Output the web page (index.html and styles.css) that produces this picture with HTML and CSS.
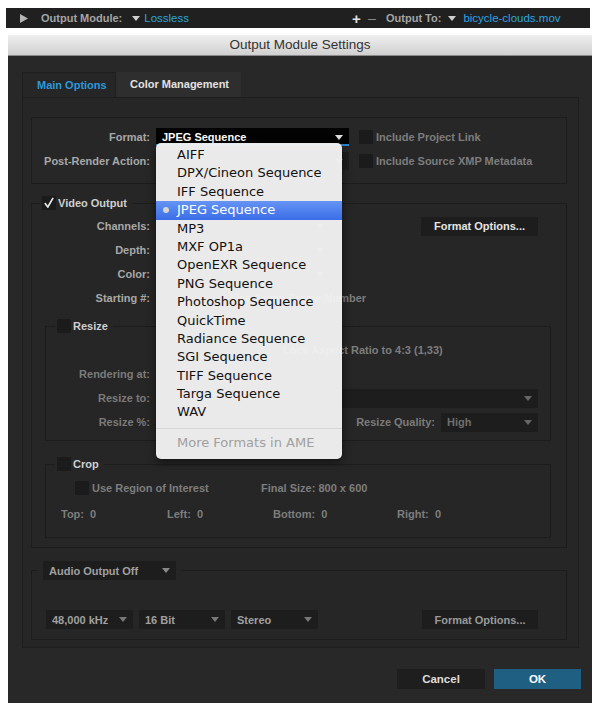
FILE: index.html
```html
<!DOCTYPE html>
<html>
<head>
<meta charset="utf-8">
<link rel="stylesheet" href="styles.css">
</head>
<body>
<div class="topbar">
  <div class="tb-left">
    <svg class="tri-right" viewBox="0 0 8 9"><polygon points="0,0 8,4.5 0,9" fill="#b5b5b5"/></svg>
    <span class="tb-label">Output Module:</span>
    <svg class="dd" viewBox="0 0 8 5"><polygon points="0,0 8,0 4,5" fill="#d0d0d0"/></svg>
    <span class="tb-link">Lossless</span>
  </div>
  <div class="tb-right">
    <span class="tb-plus">+</span><span class="tb-minus">–</span>
    <span class="tb-label">Output To:</span>
    <svg class="dd" viewBox="0 0 8 5"><polygon points="0,0 8,0 4,5" fill="#d0d0d0"/></svg>
    <span class="tb-link">bicycle-clouds.mov</span>
  </div>
</div>

<div class="dialog">
  <div class="titlebar">Output Module Settings</div>
  <div class="dbody">
    <div class="tabs">
      <div class="tab active">Main Options</div>
      <div class="tab other">Color Management</div>
    </div>
    <div class="panel">
      <div class="group">
        <div class="row">
          <div class="lbl w118">Format:</div>
          <div class="fmt-wrap">
            <div class="ddbox fmt"><span>JPEG Sequence</span><svg class="dd" viewBox="0 0 8 5"><polygon points="0,0 8,0 4,5" fill="#e0e0e0"/></svg></div>
            <div class="menu">
              <div class="mi">AIFF</div>
              <div class="mi">DPX/Cineon Sequence</div>
              <div class="mi">IFF Sequence</div>
              <div class="mi sel"><span class="bullet"></span>JPEG Sequence</div>
              <div class="mi">MP3</div>
              <div class="mi">MXF OP1a</div>
              <div class="mi">OpenEXR Sequence</div>
              <div class="mi">PNG Sequence</div>
              <div class="mi">Photoshop Sequence</div>
              <div class="mi">QuickTime</div>
              <div class="mi">Radiance Sequence</div>
              <div class="mi">SGI Sequence</div>
              <div class="mi">TIFF Sequence</div>
              <div class="mi">Targa Sequence</div>
              <div class="mi">WAV</div>
              <div class="msep"></div>
              <div class="mi more">More Formats in AME</div>
            </div>
          </div>
          <div class="cb ml10"></div><span class="dim ml3">Include Project Link</span>
        </div>
        <div class="row">
          <div class="lbl w118">Post-Render Action:</div>
          <div class="ddbox w193 end"><svg class="dd" viewBox="0 0 8 5"><polygon points="0,0 8,0 4,5" fill="#777"/></svg></div>
          <div class="cb ml10"></div><span class="dim ml3">Include Source XMP Metadata</span>
        </div>
      </div>

      <div class="fs video">
        <div class="legend lg-video">
          <div class="cb checked"><svg viewBox="0 0 14 14"><path d="M3.2 7.6 L5.8 11 L10.8 2.4" fill="none" stroke="#e8e8e8" stroke-width="1.7" stroke-linecap="round" stroke-linejoin="round"/></svg></div>
          <span class="legend-txt ml2">Video Output</span>
        </div>
        <div class="rows pt2">
          <div class="row">
            <div class="lbl w118">Channels:</div>
            <div class="ddbox w174 end"><svg class="dd" viewBox="0 0 8 5"><polygon points="0,0 8,0 4,5" fill="#777"/></svg></div>
            <div class="btn fo-top">Format Options...</div>
          </div>
          <div class="row">
            <div class="lbl w118">Depth:</div>
            <div class="ddbox w174 end"><svg class="dd" viewBox="0 0 8 5"><polygon points="0,0 8,0 4,5" fill="#777"/></svg></div>
          </div>
          <div class="row">
            <div class="lbl w118">Color:</div>
            <div class="ddbox w174 end"><svg class="dd" viewBox="0 0 8 5"><polygon points="0,0 8,0 4,5" fill="#777"/></svg></div>
          </div>
          <div class="row">
            <div class="lbl w118">Starting #:</div>
            <div class="inbox w52"></div>
            <div class="cb ml6"></div><span class="dim ml3">Use Comp Frame Number</span>
          </div>
        </div>

        <div class="fs sub resize">
          <div class="legend lg-sub">
            <div class="cb"></div>
            <span class="legend-txt ml2">Resize</span>
          </div>
          <div class="rows pt3 pb6">
            <div class="row">
              <div class="cb lock"></div><span class="dim ml3">Lock Aspect Ratio to 4:3 (1,33)</span>
            </div>
            <div class="row">
              <div class="lbl w104 dimlbl">Rendering at:</div>
            </div>
            <div class="row">
              <div class="lbl w104 dimlbl">Resize to:</div>
              <div class="ddbox w382 off end"><svg class="dd" viewBox="0 0 8 5"><polygon points="0,0 8,0 4,5" fill="#666"/></svg></div>
            </div>
            <div class="row">
              <div class="lbl w104 dimlbl">Resize %:</div>
              <div class="lbl dimlbl rq">Resize Quality:</div>
              <div class="ddbox w97 off"><span>High</span><svg class="dd" viewBox="0 0 8 5"><polygon points="0,0 8,0 4,5" fill="#666"/></svg></div>
            </div>
          </div>
        </div>

        <div class="fs sub crop">
          <div class="legend lg-sub">
            <div class="cb"></div>
            <span class="legend-txt ml2">Crop</span>
          </div>
          <div class="rows pt2 pb10">
            <div class="row h26">
              <div class="cell c1"><div class="cb"></div><span class="dim ml3">Use Region of Interest</span></div>
              <span class="dim">Final Size: 800 x 600</span>
            </div>
            <div class="row h26 pl15">
              <span class="dim cw106">Top:&nbsp; 0</span>
              <span class="dim cw106">Left:&nbsp; 0</span>
              <span class="dim cw124">Bottom:&nbsp; 0</span>
              <span class="dim">Right:&nbsp; 0</span>
            </div>
          </div>
        </div>
      </div>

      <div class="fs audio">
        <div class="legend lg-audio">
          <div class="ddbox w133 aud"><span>Audio Output Off</span><svg class="dd" viewBox="0 0 8 5"><polygon points="0,0 8,0 4,5" fill="#888"/></svg></div>
        </div>
        <div class="row audio-row">
          <div class="ddbox w87 aud"><span>48,000 kHz</span><svg class="dd" viewBox="0 0 8 5"><polygon points="0,0 8,0 4,5" fill="#777"/></svg></div>
          <div class="ddbox w86 aud ml6"><span>16 Bit</span><svg class="dd" viewBox="0 0 8 5"><polygon points="0,0 8,0 4,5" fill="#777"/></svg></div>
          <div class="ddbox w87 aud ml6"><span>Stereo</span><svg class="dd" viewBox="0 0 8 5"><polygon points="0,0 8,0 4,5" fill="#777"/></svg></div>
          <div class="btn fo-bot">Format Options...</div>
        </div>
      </div>
    </div>
    <div class="footer">
      <div class="btn cancel">Cancel</div>
      <div class="btn ok">OK</div>
    </div>
  </div>
</div>
</body>
</html>
```

FILE: styles.css
```css
* { box-sizing: border-box; }
body {
  margin: 0;
  background: #ffffff;
  font-family: "Liberation Sans", Arial, sans-serif;
}

/* top bar */
.topbar {
  margin: 8px 10px 0 6px;
  height: 20px;
  background: #202020;
  display: flex;
  align-items: center;
  padding-left: 14px;
  font-size: 11px;
}
.tb-left { width: 332px; display: flex; align-items: center; }
.tb-right { display: flex; align-items: center; }
.tb-label { color: #a5a5a5; font-weight: bold; }
.tb-link { color: #2ea3df; font-size: 11.5px; }
.tri-right { width: 8px; height: 9px; margin-right: 13px; }
.dd { width: 8px; height: 5px; flex: none; }
.tb-left .dd { margin: 0 4px 0 10px; }
.tb-right .dd { margin: 0 7px 0 7px; }
.tb-plus { color: #e0e0e0; font-weight: bold; font-size: 15px; width: 16px; }
.tb-minus { color: #8a8a8a; font-size: 14px; width: 18px; }

/* dialog */
.dialog { margin: 7px 8px 0 8px; width: 584px; }
.titlebar {
  height: 21px;
  background: linear-gradient(#efefef, #d0d0d0);
  border-bottom: 1px solid #8a8a8a;
  text-align: center;
  font-size: 13.5px;
  line-height: 20px;
  color: #333;
}
.dbody {
  background: #282828;
  height: 647px;
  padding: 16px 13px 0 14px;
  display: flex;
  flex-direction: column;
}

.tabs { display: flex; height: 25px; }
.tab {
  height: 25px;
  line-height: 25px;
  font-size: 11px;
  font-weight: bold;
}
.tab.active {
  width: 94px;
  padding-left: 14px;
  color: #2b99d8;
  background: #262626;
  border: 1px solid #1f1f1f;
  border-bottom: none;
  line-height: 24px;
}
.tab.other {
  width: 125px;
  padding-left: 14px;
  color: #e2e2e2;
  background: #2e2e2e;
}

.panel {
  border: 1px solid #1e1e1e;
  background: #262626;
  height: 551px;
  padding: 19px 11px 0 8px;
}

.group { border: 1px solid #1c1c1c; background: #272727; padding: 7px 0 10px 0; }
.row { display: flex; align-items: center; height: 24px; }
.h26 { height: 26px; }
.lbl {
  flex: none;
  text-align: right;
  color: #a8a8a8;
  font-weight: bold;
  font-size: 11px;
  margin-right: 6px;
}
.dimlbl { color: #7b7b7b; }
.w118 { width: 118px; }
.w104 { width: 104px; }

.ddbox {
  flex: none;
  height: 18px;
  background: #1d1d1d;
  display: flex;
  align-items: center;
  justify-content: space-between;
  padding: 0 6px 0 6px;
  font-size: 11px;
  font-weight: bold;
  color: #a8a8a8;
}
.ddbox.end { justify-content: flex-end; }
.ddbox.off { color: #6e6e6e; height: 19px; }
.ddbox.fmt {
  width: 193px;
  background: #030303;
  color: #ffffff;
  border-bottom: 2px solid #2c86c8;
  padding-top: 2px;
}
.w193 { width: 193px; }
.w174 { width: 174px; }
.w382 { width: 382px; }
.w97 { width: 97px; }
.w133 { width: 133px; }
.w87 { width: 87px; }
.w86 { width: 86px; }

.inbox {
  flex: none;
  height: 18px;
  background: #1d1d1d;
}
.w52 { width: 52px; }

.cb { flex: none; width: 14px; height: 14px; background: #1b1b1b; }
.cb svg { display: block; width: 14px; height: 14px; }
.dim { color: #7d7d7d; font-size: 11px; font-weight: bold; white-space: nowrap; }
.ml10 { margin-left: 10px; }
.ml6 { margin-left: 6px; }
.ml3 { margin-left: 3px; }
.ml2 { margin-left: 2px; }
.pt2 { padding-top: 2px; }
.pt3 { padding-top: 3px; }
.pb6 { padding-bottom: 6px; }
.pb10 { padding-bottom: 10px; }
.pl15 { padding-left: 15px; }

/* fieldsets */
.fs { border: 1px solid #1c1c1c; }
.fs.video { margin-top: 19px; padding-bottom: 9px; }
.fs.sub { margin: 0 15px 0 13px; }
.fs.resize { margin-top: 16px; }
.fs.crop { margin-top: 23px; }
.fs.audio { margin-top: 22px; padding-bottom: 10px; }

.legend {
  display: flex;
  align-items: center;
  height: 18px;
  margin-top: -10px;
  background: #262626;
  width: max-content;
}
.lg-video { margin-left: 8px; padding: 0 5px 0 2px; }
.lg-sub { margin-left: 9px; padding: 0 5px 0 2px; }
.lg-audio { margin-left: 5px; padding: 0 6px; height: 19px; }
.legend-txt { color: #cfcfcf; font-size: 11px; font-weight: bold; }

.btn {
  flex: none;
  height: 19px;
  display: flex;
  align-items: center;
  justify-content: center;
  background: #1d1d1d;
  font-size: 11px;
  font-weight: bold;
  color: #e4e4e4;
}
.fo-top { width: 117px; margin-left: auto; margin-right: 28px; }
.fo-bot { width: 116px; margin-left: auto; margin-right: 28px; color: #9a9a9a; }

.lock { margin-left: 220px; }
.rq { margin-left: auto; }
.resize .row { padding-right: 12px; }

.cell { display: flex; align-items: center; }
.c1 { width: 215px; padding-left: 29px; }
.cw106 { width: 106px; }
.cw124 { width: 124px; }

.audio-row { margin-top: 30px; height: 19px; padding-left: 14px; }
.ddbox.aud { height: 19px; color: #a0a0a0; }

/* footer */
.footer {
  display: flex;
  justify-content: flex-end;
  margin-top: 21px;
  margin-right: -2px;
  gap: 9px;
}
.cancel { width: 88px; height: 20px; background: #1e1e1e; color: #dddddd; font-size: 11.5px; }
.ok { width: 87px; height: 20px; background: #1f5f82; color: #ffffff; font-size: 11.5px; }

/* popup menu */
.fmt-wrap { position: relative; flex: none; }
.menu {
  position: absolute;
  top: 15px;
  left: 0;
  width: 186px;
  z-index: 10;
  background: rgba(243, 243, 243, 0.96);
  border-radius: 5px;
  box-shadow: 0 3px 10px rgba(0, 0, 0, 0.55);
  padding: 3px 0 7px 0;
  font-family: "DejaVu Sans", "Liberation Sans", sans-serif;
  font-size: 13px;
  color: #111;
}
.mi {
  height: 18.4px;
  line-height: 18.4px;
  padding-left: 21px;
  white-space: nowrap;
  display: flex;
  align-items: center;
}
.mi.sel {
  background: linear-gradient(#6694f4, #3a6de7);
  color: #ffffff;
}
.bullet {
  width: 6px;
  height: 6px;
  border-radius: 50%;
  background: #d6d6d6;
  margin-left: -14px;
  margin-right: 8px;
  flex: none;
}
.msep { height: 1px; background: #d6d6d6; margin: 6px 0 5px 0; }
.mi.more { color: #a0a0a0; }
```
